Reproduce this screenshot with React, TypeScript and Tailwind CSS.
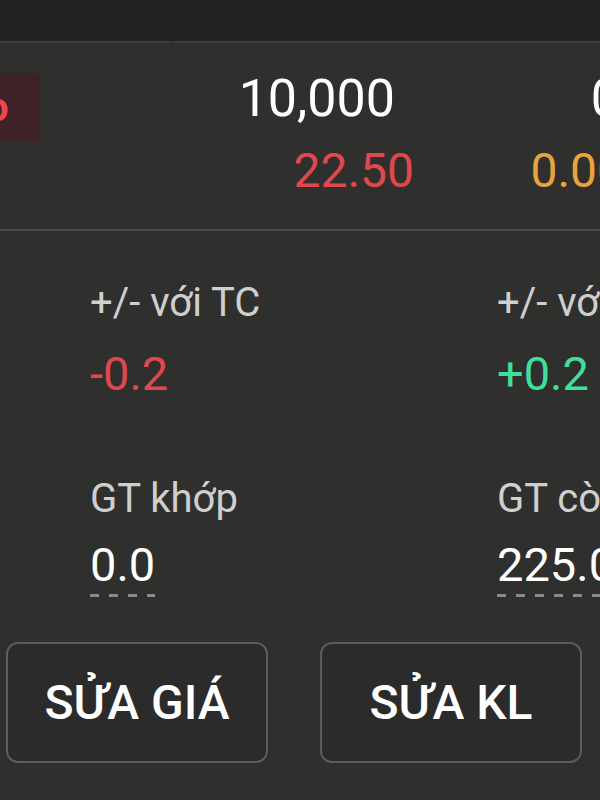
export default function App() {
  return (
    <div className="w-[600px] h-[800px] overflow-hidden bg-[#2f2f2d] font-['Roboto','Noto_Sans',sans-serif]">
      {/* top bar (cut off) */}
      <div className="h-[41px] bg-[#212121] flex justify-center overflow-hidden">
        <span className="ml-[70px] -mt-[30px] text-[36px] text-[#6a6a6a] leading-none tracking-[6px]">ᵔᵔᵔ</span>
      </div>
      <div className="flex h-[2px]">
        <div className="w-[170px] bg-[#3d3d3d]" />
        <div className="w-[2px] bg-[#2f2f2d]" />
        <div className="flex-1 bg-[#3d3d3d]" />
      </div>

      {/* quote row */}
      <div className="h-[186px] flex">
        <div className="w-[40px] mt-[30px] h-[69px] bg-[#3e2228] rounded-r-[4px] flex items-center overflow-hidden">
          <span className="-ml-[14px] text-[40px] font-bold text-[#f0454e] leading-none">o</span>
        </div>
        <div className="w-[374px] flex flex-col items-end pt-[30px]">
          <span className="mr-[19px] text-[52px] text-white leading-none">10,000</span>
          <span className="mt-[22px] text-[48px] text-[#e0474f] leading-none">22.50</span>
        </div>
        <div className="flex-1 flex flex-col items-end overflow-hidden pt-[30px]">
          <span className="-mr-[20px] text-[52px] text-white leading-none">0</span>
          <span className="mt-[22px] -mr-[24px] text-[48px] text-[#e8a33c] leading-none">0.00</span>
        </div>
      </div>
      <div className="h-[2px] bg-[#4a4a48]" />

      {/* details */}
      <div className="grid grid-cols-[407px_1fr] pl-[90px] pt-[52px] whitespace-nowrap overflow-hidden">
        <div className="flex flex-col">
          <span className="text-[40px] text-[#cfcfcf] leading-none">+/- với TC</span>
          <span className="mt-[27px] text-[47px] text-[#e0474f] leading-none">-0.2</span>
        </div>
        <div className="flex flex-col">
          <span className="text-[40px] text-[#cfcfcf] leading-none">+/- với TC</span>
          <span className="mt-[27px] text-[47px] text-[#41df9c] leading-none">+0.2</span>
        </div>
        <div className="flex flex-col items-start mt-[82px]">
          <span className="text-[40px] text-[#cfcfcf] leading-none">GT khớp</span>
          <div className="mt-[22px] flex flex-col">
            <span className="text-[47px] text-white leading-none">0.0</span>
            <div className="mt-[6px] h-[3px] bg-[repeating-linear-gradient(90deg,#8a8a8a_0_9px,transparent_9px_19px)]" />
          </div>
        </div>
        <div className="flex flex-col items-start mt-[82px]">
          <span className="text-[40px] text-[#cfcfcf] leading-none">GT còn lại</span>
          <div className="mt-[22px] flex flex-col">
            <span className="text-[47px] text-white leading-none">225.000</span>
            <div className="mt-[6px] h-[3px] bg-[repeating-linear-gradient(90deg,#8a8a8a_0_9px,transparent_9px_19px)]" />
          </div>
        </div>
      </div>

      {/* buttons */}
      <div className="flex gap-[52px] pl-[6px] mt-[45px]">
        <button className="w-[262px] h-[121px] rounded-[12px] border-2 border-[#5c5c5c] bg-[#2b2b2b] text-white text-[48px] font-medium">
          SỬA GIÁ
        </button>
        <button className="w-[262px] h-[121px] rounded-[12px] border-2 border-[#5c5c5c] bg-[#2b2b2b] text-white text-[48px] font-medium">
          SỬA KL
        </button>
      </div>
    </div>
  );
}
